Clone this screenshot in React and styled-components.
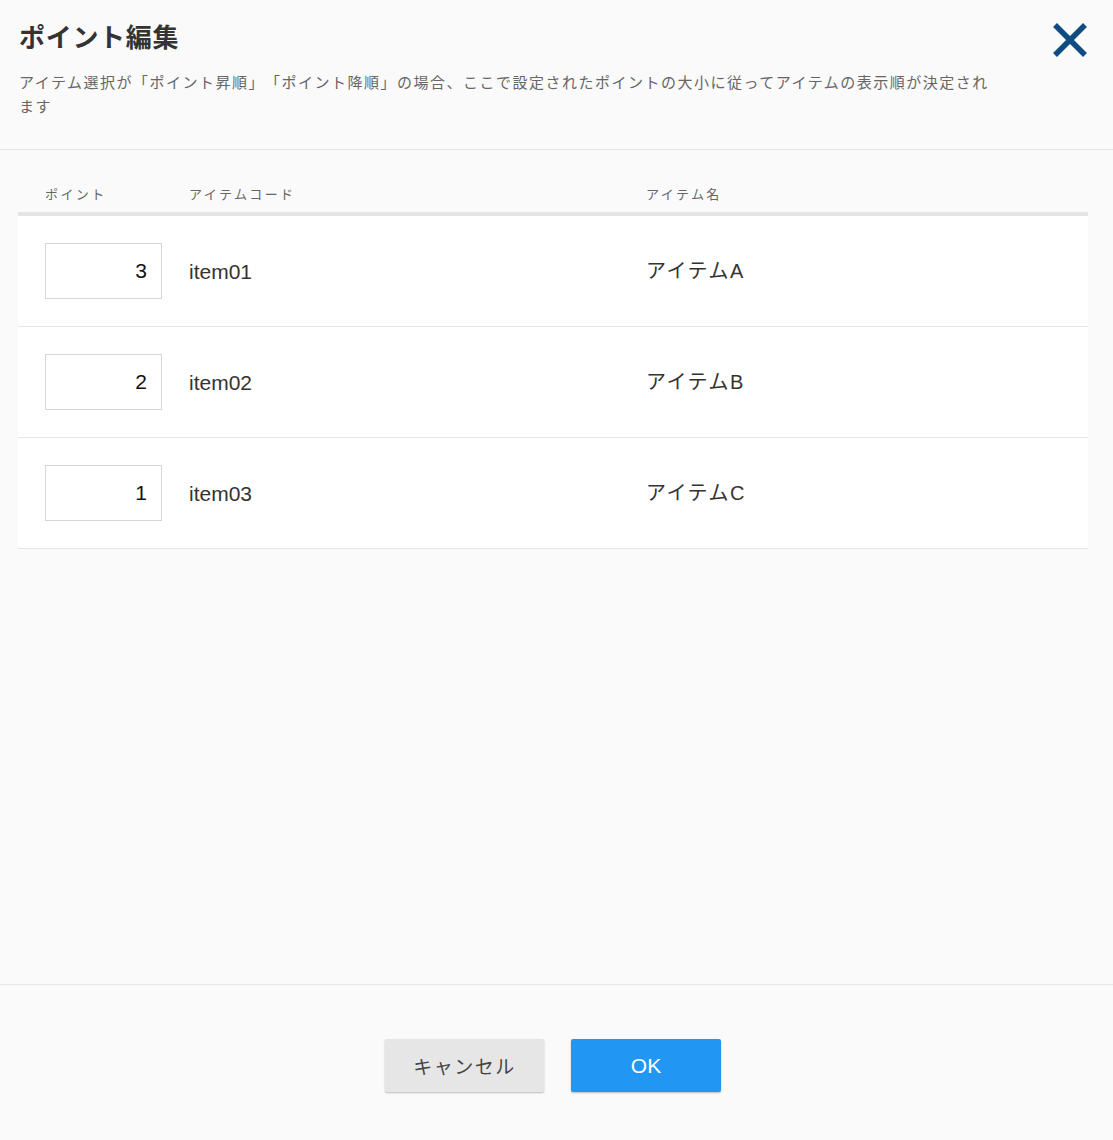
import React, { useState } from "react";
import styled, { createGlobalStyle } from "styled-components";

const GlobalStyle = createGlobalStyle`
	html, body {
		margin: 0;
		padding: 0;
		background: #fafafa;
	}
	body {
		font-family: "Liberation Sans", "Noto Sans CJK JP", sans-serif;
		color: #333;
		text-spacing-trim: space-all;
	}
`;

const Page = styled.div`
	display: flex;
	flex-direction: column;
	height: 1140px;
	background: #fafafa;
`;

const Header = styled.header`
	position: relative;
	padding: 19px 100px 34px 19px;
	border-bottom: 1px solid #e6e6e6;
	height: 150px;
	box-sizing: border-box;
`;

const Title = styled.h1`
	margin: 0;
	font-size: 26px;
	font-weight: bold;
	line-height: 38px;
	letter-spacing: 0.7px;
	color: #333;
`;

const Description = styled.p`
	margin: 14px 0 0;
	font-size: 15px;
	line-height: 24px;
	letter-spacing: 1.5px;
	color: #666;
	max-width: 980px;
`;

const CloseButton = styled.button`
	position: absolute;
	top: 21px;
	right: 24px;
	width: 38px;
	height: 38px;
	padding: 0;
	border: none;
	background: none;
	cursor: pointer;
`;

const Body = styled.main`
	flex: 1;
	padding: 34px 25px 0 18px;
`;

const Table = styled.div`
	display: flex;
	flex-direction: column;
`;

const Row = styled.div`
	display: grid;
	grid-template-columns: 171px 457px 1fr;
	align-items: center;
	background: ${p => (p.$head ? "transparent" : "#fff")};
	height: ${p => (p.$head ? "28px" : "110px")};
	border-bottom: ${p => (p.$head ? "4px solid #e5e5e5" : "1px solid #e6e6e6")};
`;

const HeadCell = styled.div`
	padding-left: 27px;
	font-size: 13px;
	letter-spacing: 2.4px;
	color: #666;
	align-self: start;
	&:nth-child(n + 2) {
		padding-left: 0;
	}
`;

const Cell = styled.div`
	font-size: ${p => (p.$jp ? "20px" : "21px")};
	line-height: 1;
	color: #333;
	padding-left: ${p => (p.$first ? "27px" : "0")};
	letter-spacing: ${p => (p.$jp ? "1.5px" : "0")};
	margin-top: ${p => (p.$jp ? "-1px" : "0")};
`;

const PointInput = styled.input`
	width: 117px;
	height: 56px;
	box-sizing: border-box;
	border: 1px solid #d6d6d6;
	background: #fff;
	text-align: right;
	padding: 0 14px;
	font-size: 21px;
	font-family: "Liberation Sans", sans-serif;
	color: #111;
	outline: none;
`;

const Footer = styled.footer`
	height: 156px;
	box-sizing: border-box;
	border-top: 1px solid #e6e6e6;
	display: flex;
	justify-content: center;
	align-items: flex-start;
	gap: 27px;
	padding: 54px 7px 0 0;
`;

const Button = styled.button`
	height: 53px;
	width: ${p => (p.$primary ? "150px" : "159px")};
	border: none;
	border-radius: 2px;
	font-family: "Liberation Sans", "Noto Sans CJK JP", sans-serif;
	font-size: ${p => (p.$primary ? "21px" : "19px")};
	letter-spacing: ${p => (p.$primary ? "0" : "1.5px")};
	color: ${p => (p.$primary ? "#fff" : "#444")};
	background: ${p => (p.$primary ? "#2196f3" : "#e6e6e6")};
	box-shadow: 0 1px 2px rgba(0, 0, 0, 0.25);
	cursor: pointer;
`;

const items = [
	{ code: "item01", name: "アイテムA", point: "3" },
	{ code: "item02", name: "アイテムB", point: "2" },
	{ code: "item03", name: "アイテムC", point: "1" }
];

export default function App() {
	const [points, setPoints] = useState(items.map(i => i.point));

	return (
		<Page>
			<GlobalStyle />
			<Header>
				<Title>ポイント編集</Title>
				<Description>
					アイテム選択が「ポイント昇順」「ポイント降順」の場合、ここで設定されたポイントの大小に従ってアイテムの表示順が決定されます
				</Description>
				<CloseButton aria-label="close">
					<svg width="38" height="38" viewBox="0 0 38 38">
						<path d="M4 4 L34 34 M34 4 L4 34" stroke="#0e4c82" strokeWidth="5.5" />
					</svg>
				</CloseButton>
			</Header>
			<Body>
				<Table>
					<Row $head>
						<HeadCell>ポイント</HeadCell>
						<HeadCell>アイテムコード</HeadCell>
						<HeadCell>アイテム名</HeadCell>
					</Row>
					{items.map((item, i) => (
						<Row key={item.code}>
							<Cell $first>
								<PointInput
									value={points[i]}
									onChange={e => {
										const next = [...points];
										next[i] = e.target.value;
										setPoints(next);
									}}
								/>
							</Cell>
							<Cell>{item.code}</Cell>
							<Cell $jp>{item.name}</Cell>
						</Row>
					))}
				</Table>
			</Body>
			<Footer>
				<Button>キャンセル</Button>
				<Button $primary>OK</Button>
			</Footer>
		</Page>
	);
}
